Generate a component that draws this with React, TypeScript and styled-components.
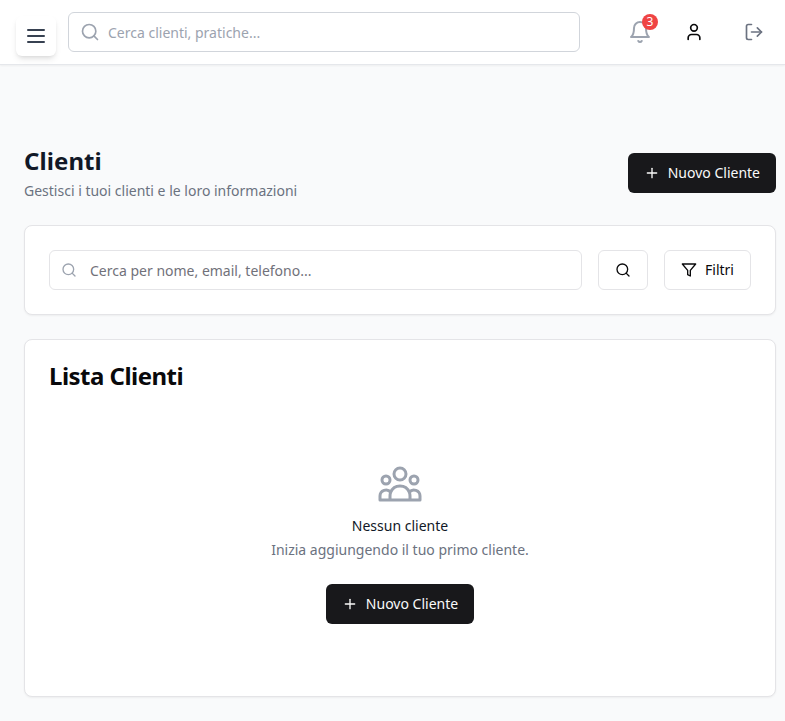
import React from "react";
import styled, { createGlobalStyle } from "styled-components";
import { Search, User, LogOut, Plus } from "lucide-react";

const GlobalStyle = createGlobalStyle`
  *, *::before, *::after { box-sizing: border-box; }
  body {
    margin: 0;
    background: #f9fafb;
    color: #09090b;
    font-family: "Noto Sans", sans-serif;
    font-size: 14px;
    line-height: 20px;
    overflow: hidden;
  }
  button, input { font: inherit; color: inherit; }
  h1, h2, h3, p { margin: 0; }
  svg { display: block; flex-shrink: 0; }
`;

const Page = styled.div`
  height: 721px;
`;

const TopBar = styled.header`
  display: flex;
  align-items: flex-start;
  height: 65px;
  padding: 12px 5px 0 16px;
  background: #fff;
  border-bottom: 1px solid #e5e7eb;
  box-shadow: 0 1px 2px rgba(0, 0, 0, 0.05);
`;

const MenuButton = styled.button`
  display: grid;
  place-items: center;
  width: 40px;
  height: 40px;
  margin: 4px 12px 0 0;
  padding: 0;
  border: 0;
  border-radius: 6px;
  background: #fff;
  color: #374151;
  box-shadow: 0 4px 6px -1px rgba(0, 0, 0, 0.1), 0 2px 4px -2px rgba(0, 0, 0, 0.1);
`;

const SearchField = styled.label<{ $gap: number; $border: string }>`
  display: flex;
  align-items: center;
  gap: ${(p) => p.$gap}px;
  height: 40px;
  flex: 1;
  padding: 0 11px;
  background: #fff;
  border: 1px solid ${(p) => p.$border};
  border-radius: 6px;
  color: #9ca3af;
`;

const GlobalSearch = styled.div`
  display: flex;
  width: 512px;
`;

const SearchInput = styled.input<{ $placeholder: string }>`
  flex: 1;
  min-width: 0;
  height: 100%;
  padding: 0;
  border: 0;
  outline: 0;
  background: transparent;
  &::placeholder { color: ${(p) => p.$placeholder}; opacity: 1; }
`;

const TopActions = styled.div`
  display: flex;
  margin-left: auto;
  align-items: center;
  height: 40px;
`;

const IconButton = styled.button<{ $color: string; $width: number }>`
  position: relative;
  display: grid;
  place-items: center;
  width: ${(p) => p.$width}px;
  height: 40px;
  padding: 0;
  border: 0;
  background: transparent;
  color: ${(p) => p.$color};
`;

const Badge = styled.span`
  position: absolute;
  top: 2px;
  right: 2px;
  width: 16px;
  height: 16px;
  border-radius: 50%;
  background: #ef4444;
  color: #fff;
  font-size: 12px;
  line-height: 16px;
  text-align: center;
`;

const Main = styled.main`
  display: flex;
  flex-direction: column;
  gap: 24px;
  padding: 80px 9px 24px 24px;
`;

const PageHeading = styled.div`
  display: flex;
  align-items: center;
  justify-content: space-between;
  height: 56px;
`;

const Title = styled.h1`
  font-size: 24px;
  line-height: 32px;
  font-weight: 700;
  letter-spacing: 0.08px;
  color: #111827;
`;

const Muted = styled.p`
  color: #6b7280;
`;

const Intro = styled.div`
  display: grid;
  gap: 4px;
`;

const PrimaryButton = styled.button`
  display: flex;
  align-items: center;
  gap: 8px;
  height: 40px;
  padding: 0 16px;
  border: 0;
  border-radius: 6px;
  background: #18181b;
  color: #fafafa;
  white-space: nowrap;
`;

const OutlineButton = styled.button`
  display: flex;
  align-items: center;
  gap: 8px;
  height: 40px;
  padding: 0 16px;
  border: 1px solid #e4e4e7;
  border-radius: 6px;
  background: #fff;
`;

const Card = styled.section`
  background: #fff;
  border: 1px solid #e4e4e7;
  border-radius: 8px;
  box-shadow: 0 1px 2px rgba(0, 0, 0, 0.05);
  padding: 24px;
`;

const FilterCard = styled(Card)`
  display: flex;
  gap: 16px;
  height: 90px;
`;

const ListCard = styled(Card)`
  height: 358px;
`;

const ListTitle = styled.h2`
  font-size: 24px;
  line-height: 24px;
  font-weight: 700;
  letter-spacing: -0.52px;
`;

const EmptyState = styled.div`
  display: flex;
  flex-direction: column;
  align-items: center;
  padding-top: 72px;
`;

const EmptyTitle = styled.h3`
  margin: 8px 0 4px;
  font-size: 14px;
  line-height: 20px;
  font-weight: 400;
  color: #111827;
`;

const EmptyAction = styled.div`
  margin-top: 24px;
`;

const StrokeIcon = ({ size, width = 2, children }: { size: number; width?: number; children: React.ReactNode }) => (
  <svg width={size} height={size} viewBox="0 0 24 24" fill="none" stroke="currentColor" strokeWidth={width} strokeLinecap="round" strokeLinejoin="round">
    {children}
  </svg>
);

const MenuIcon = () => (
  <StrokeIcon size={24}><path d="M4 6h16M4 12h16M4 18h16" /></StrokeIcon>
);

const BellIcon = () => (
  <StrokeIcon size={24}>
    <path d="M6 8a6 6 0 0 1 12 0c0 7 3 9 3 9H3s3-2 3-9" />
    <path d="M10.3 21a1.94 1.94 0 0 0 3.4 0" />
  </StrokeIcon>
);

const FunnelIcon = () => (
  <StrokeIcon size={16}><polygon points="22 3 2 3 10 12.46 10 19 14 21 14 12.46 22 3" /></StrokeIcon>
);

const GroupIcon = () => (
  <svg width="48" height="48" viewBox="0 0 24 24" fill="none" stroke="#9ca3af" strokeWidth="1.5" strokeLinecap="round" strokeLinejoin="round">
    <path d="M17 20h5v-2a3 3 0 0 0-5.356-1.857M17 20H7m10 0v-2c0-.656-.126-1.283-.356-1.857M7 20H2v-2a3 3 0 0 1 5.356-1.857M7 20v-2c0-.656.126-1.283.356-1.857m0 0a5.002 5.002 0 0 1 9.288 0M15 7a3 3 0 1 1-6 0 3 3 0 0 1 6 0Zm6 3a2 2 0 1 1-4 0 2 2 0 0 1 4 0ZM7 10a2 2 0 1 1-4 0 2 2 0 0 1 4 0Z" />
  </svg>
);

const NewClientButton = () => (
  <PrimaryButton><Plus size={16} />Nuovo Cliente</PrimaryButton>
);

export default function App() {
  return (
    <Page>
      <GlobalStyle />
      <TopBar>
        <MenuButton aria-label="Menu"><MenuIcon /></MenuButton>
        <GlobalSearch>
          <SearchField $gap={8} $border="#d1d5db">
            <Search size={20} />
            <SearchInput $placeholder="#9ca3af" placeholder="Cerca clienti, pratiche..." />
          </SearchField>
        </GlobalSearch>
        <TopActions>
          <IconButton $color="#9ca3af" $width={40} aria-label="Notifiche">
            <BellIcon />
            <Badge>3</Badge>
          </IconButton>
          <IconButton $color="#09090b" $width={68} aria-label="Profilo"><User size={20} /></IconButton>
          <IconButton $color="#6b7280" $width={52} aria-label="Esci"><LogOut size={20} /></IconButton>
        </TopActions>
      </TopBar>
      <Main>
        <PageHeading>
          <Intro>
            <Title>Clienti</Title>
            <Muted>Gestisci i tuoi clienti e le loro informazioni</Muted>
          </Intro>
          <NewClientButton />
        </PageHeading>
        <FilterCard>
          <SearchField $gap={13} $border="#e4e4e7">
            <Search size={16} />
            <SearchInput $placeholder="#71717a" placeholder="Cerca per nome, email, telefono..." />
          </SearchField>
          <OutlineButton aria-label="Cerca"><Search size={16} /></OutlineButton>
          <OutlineButton><FunnelIcon />Filtri</OutlineButton>
        </FilterCard>
        <ListCard>
          <ListTitle>Lista Clienti</ListTitle>
          <EmptyState>
            <GroupIcon />
            <EmptyTitle>Nessun cliente</EmptyTitle>
            <Muted>Inizia aggiungendo il tuo primo cliente.</Muted>
            <EmptyAction><NewClientButton /></EmptyAction>
          </EmptyState>
        </ListCard>
      </Main>
    </Page>
  );
}
